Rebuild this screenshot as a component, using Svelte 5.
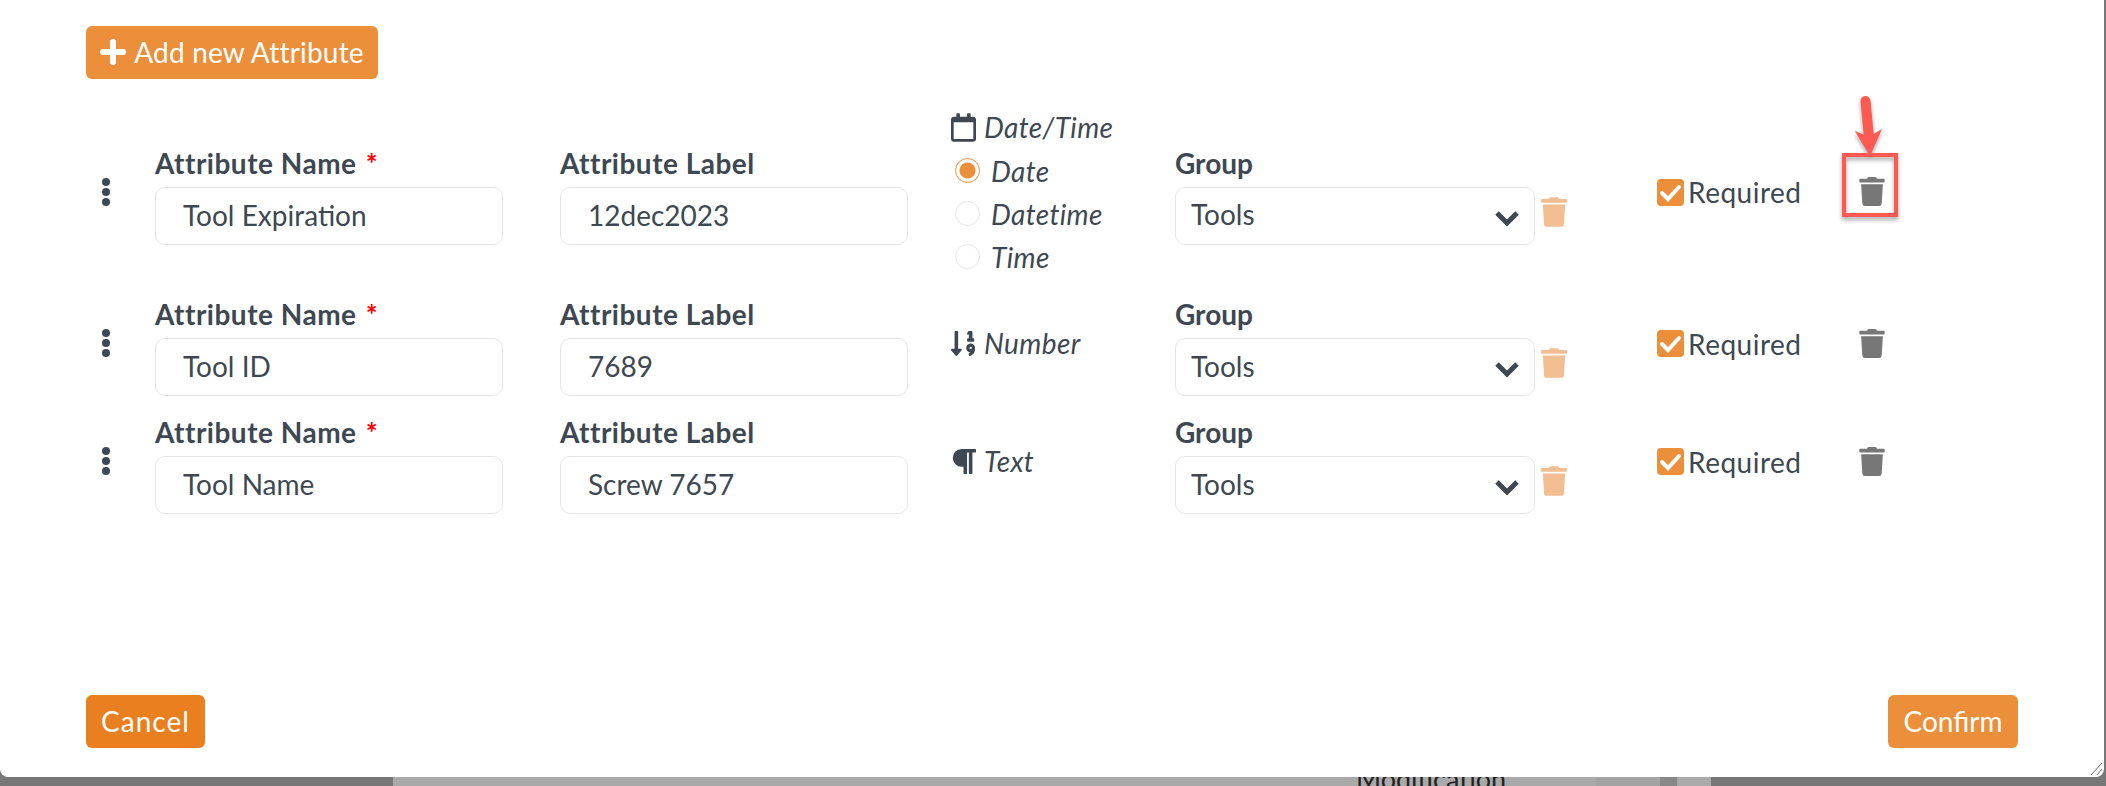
<script>
  const trashPath =
    'M432 32H312l-9.4-18.7A24 24 0 0 0 281.1 0H166.8a23.72 23.72 0 0 0-21.4 13.3L136 32H16A16 16 0 0 0 0 48v32a16 16 0 0 0 16 16h416a16 16 0 0 0 16-16V48a16 16 0 0 0-16-16zM53.2 467a48 48 0 0 0 47.9 45h245.8a48 48 0 0 0 47.9-45L416 128H32z';

  const icons = {
    calendar: {
      box: '0 0 448 512',
      d: 'M400 64h-48V12c0-6.6-5.4-12-12-12h-40c-6.6 0-12 5.4-12 12v52H160V12c0-6.6-5.4-12-12-12h-40c-6.6 0-12 5.4-12 12v52H48C21.5 64 0 85.5 0 112v352c0 26.5 21.5 48 48 48h352c26.5 0 48-21.5 48-48V112c0-26.5-21.5-48-48-48zm-6 400H54c-3.3 0-6-2.7-6-6V160h352v298c0 3.3-2.7 6-6 6z'
    },
    number: {
      box: '0 0 448 512',
      d: 'M304 96h16v64h-16a16 16 0 0 0-16 16v32a16 16 0 0 0 16 16h96a16 16 0 0 0 16-16v-32a16 16 0 0 0-16-16h-16V48a16 16 0 0 0-16-16h-48a16 16 0 0 0-14.29 8.83l-16 32A16 16 0 0 0 304 96zm26.15 162.91a79 79 0 0 0-55 54.17c-14.25 51.05 21.21 97.77 68.85 102.53a84.07 84.07 0 0 1-20.85 12.91c-7.57 3.4-10.8 12.47-8.18 20.34l9.9 20c2.87 8.63 12.53 13.49 20.9 9.91 58-24.76 86.25-61.61 86.25-132V336c-.02-51.21-48.4-91.34-101.85-77.09zM352 356a20 20 0 1 1 20-20 20 20 0 0 1-20 20zm-176-4h-48V48a16 16 0 0 0-16-16H80a16 16 0 0 0-16 16v304H16c-14.19 0-21.36 17.24-11.29 27.31l80 96a16 16 0 0 0 22.62 0l80-96C197.35 369.26 190.22 352 176 352z'
    },
    text: {
      box: '0 0 448 512',
      d: 'M448 48v32a16 16 0 0 1-16 16h-48v368a16 16 0 0 1-16 16h-32a16 16 0 0 1-16-16V96h-32v368a16 16 0 0 1-16 16h-32a16 16 0 0 1-16-16V352h-32a160 160 0 0 1 0-320h240a16 16 0 0 1 16 16z'
    }
  };

  let attributes = $state([
    { name: 'Tool Expiration', label: '12dec2023', icon: 'calendar', type: 'Date/Time', group: 'Tools', required: true, format: 'Date' },
    { name: 'Tool ID', label: '7689', icon: 'number', type: 'Number', group: 'Tools', required: true },
    { name: 'Tool Name', label: 'Screw 7657', icon: 'text', type: 'Text', group: 'Tools', required: true }
  ]);

  const formats = ['Date', 'Datetime', 'Time'];
</script>

<div class="page">
  <div class="modal">
    <button class="btn add" type="button">
      <svg class="plus" viewBox="0 0 26 26" aria-hidden="true">
        <path d="M13 3v20M3 13h20" />
      </svg>
      Add new Attribute
    </button>

    <div class="rows">
      {#each attributes as attr}
        <div class="row">
          <div class="handle" aria-hidden="true"><i></i><i></i><i></i></div>

          <div class="field name">
            <label>
              <span class="label-text">Attribute Name <b>*</b></span>
              <input type="text" bind:value={attr.name} />
            </label>
          </div>

          <div class="field name">
            <label>
              <span class="label-text">Attribute Label</span>
              <input type="text" bind:value={attr.label} />
            </label>
          </div>

          <div class="type">
            <div class="type-head">
              <svg class="type-icon" viewBox={icons[attr.icon].box} aria-hidden="true">
                <path d={icons[attr.icon].d} />
              </svg>
              <em>{attr.type}</em>
            </div>
            {#if attr.format}
              {#each formats as f}
                <label class="radio">
                  <input type="radio" value={f} bind:group={attr.format} />
                  <em>{f}</em>
                </label>
              {/each}
            {/if}
          </div>

          <div class="group-cell">
            <div class="field group">
              <label>
                <span class="label-text short">Group</span>
                <span class="select">
                  <select bind:value={attr.group}>
                    <option>Tools</option>
                  </select>
                  <svg class="chevron" viewBox="0 0 26 16" aria-hidden="true">
                    <path d="M3 3l10 10L23 3" />
                  </svg>
                </span>
              </label>
            </div>
            <svg class="group-trash" viewBox="0 0 448 512" aria-hidden="true"><path d={trashPath} /></svg>
          </div>

          <label class="required">
            <input type="checkbox" bind:checked={attr.required} />
            <span class="box">
              <svg viewBox="0 0 27 27" aria-hidden="true"><path d="M5 14l6 6L22 8" /></svg>
            </span>
            Required
          </label>

          <svg class="delete" viewBox="0 0 448 512" aria-hidden="true"><path d={trashPath} /></svg>
        </div>
      {/each}
    </div>

    <div class="footer">
      <button class="btn cancel" type="button">Cancel</button>
      <button class="btn confirm" type="button">Confirm</button>
    </div>

    <!-- screenshot annotation over the first delete icon -->
    <svg class="callout" viewBox="0 0 80 130" aria-hidden="true">
      <path class="arrow" d="M27.500 9 L 31 46" />
      <path class="arrow-head" d="M16.700 38.700 L 31 45 L 44 37 L 32 64 Z" />
      <rect class="frame" x="6" y="63" width="52" height="60" />
    </svg>

    <svg class="grip" viewBox="0 0 14 14" aria-hidden="true">
      <path d="M2 13L13 1M8 13l5-6" />
    </svg>
  </div>

  <div class="behind">
    <div class="band main"><span>Modification</span></div>
    <div class="band side"></div>
    <div class="band dark"></div>
    <div class="band end"></div>
  </div>
</div>

<style>
  :global(body) {
    margin: 0;
    background: #777;
  }

  .page {
    width: 2106px;
    height: 786px;
    overflow: hidden;
    font-family: Lato, "Open Sans", sans-serif;
    color: #3d4852;
  }

  .modal {
    position: relative;
    box-sizing: border-box;
    width: 2104px;
    height: 777px;
    padding: 26px 86px 29px 86px;
    background: #fff;
    border-radius: 0 0 8px 8px;
    display: flex;
    flex-direction: column;
    align-items: flex-start;
  }

  .btn {
    height: 53px;
    padding: 0 0 2px;
    border: none;
    border-radius: 6px;
    color: #fff;
    font: inherit;
    font-size: 28px;
    background: #ec8f3b;
    display: flex;
    align-items: center;
    justify-content: center;
  }

  .add {
    width: 292px;
    gap: 8px;
    letter-spacing: 0.2px;
  }

  .plus {
    width: 26px;
    height: 26px;
    fill: none;
    stroke: #fff;
    stroke-width: 6;
    stroke-linecap: round;
  }

  .rows {
    margin-top: 26px;
    display: flex;
    flex-direction: column;
    gap: 12px;
  }

  .row {
    display: grid;
    grid-template-columns: 69px 405px 385px 230px 482px 202px 26px;
    align-items: center;
  }

  .handle {
    display: flex;
    flex-direction: column;
    gap: 2px;
    padding-left: 16px;
  }

  .handle i {
    display: block;
    width: 8px;
    height: 8px;
    border-radius: 50%;
    background: #3d4852;
  }

  .field {
    box-sizing: border-box;
    width: 348px;
    height: 106px;
    padding-top: 10px;
  }

  .field.group {
    width: 360px;
  }

  .label-text {
    display: block;
    height: 38px;
    line-height: 28px;
    font-size: 28px;
    font-weight: 700;
    letter-spacing: 0.5px;
    white-space: nowrap;
  }

  .label-text.short {
    letter-spacing: 0;
  }

  .label-text b {
    color: #f00;
    font-size: 28px;
    font-weight: 700;
    margin-left: 2px;
  }

  input[type='text'],
  select {
    display: block;
    box-sizing: border-box;
    width: 100%;
    height: 58px;
    padding-bottom: 3px;
    border: 1px solid #e4e6e8;
    border-radius: 10px;
    background: #fff;
    color: #3d4852;
    font: inherit;
    font-size: 28px;
    outline: none;
  }

  input[type='text'] {
    padding-left: 27px;
    padding-right: 27px;
  }

  select {
    padding-left: 15px;
    padding-right: 15px;
    appearance: none;
  }

  .select {
    display: block;
    position: relative;
  }

  .chevron {
    position: absolute;
    right: 15px;
    top: 23px;
    width: 26px;
    height: 16px;
    fill: none;
    stroke: #3d4852;
    stroke-width: 5;
    pointer-events: none;
  }

  .type {
    font-size: 28px;
    padding-left: 6px;
  }

  .type-head {
    display: flex;
    align-items: center;
    gap: 8px;
    height: 44px;
  }

  .type-icon {
    width: 25px;
    height: 29px;
    fill: #3d4852;
  }

  em {
    font-style: italic;
    font-weight: 400;
    letter-spacing: 0.4px;
  }

  .radio {
    display: flex;
    align-items: center;
    gap: 11px;
    height: 43px;
    padding-left: 4px;
  }

  .radio input {
    appearance: none;
    width: 25px;
    height: 25px;
    margin: 0;
    border: 1px solid #e4e6e8;
    border-radius: 50%;
    background: #fff;
  }

  .radio input:checked {
    border-color: #ec8f3b;
    background: radial-gradient(circle, #ec8f3b 0 7.500px, #fff 8.500px);
  }

  .group-cell {
    display: flex;
    align-items: flex-end;
  }

  .group-trash {
    width: 26px;
    height: 30px;
    margin: 0 0 18px 6px;
    fill: #f3bd92;
  }

  .required {
    display: flex;
    align-items: center;
    gap: 4px;
    font-size: 28px;
    letter-spacing: 0.5px;
    margin-top: 1px;
  }

  .required input {
    position: absolute;
    opacity: 0;
    width: 0;
    height: 0;
  }

  .box {
    width: 27px;
    height: 27px;
    border-radius: 4px;
    background: #ec8f3b;
  }

  .box svg {
    display: block;
    width: 27px;
    height: 27px;
    fill: none;
    stroke: #fff;
    stroke-width: 4;
    stroke-linecap: round;
  }

  .delete {
    width: 26px;
    height: 29px;
    fill: #777;
  }

  .footer {
    margin-top: auto;
    width: 100%;
    display: flex;
    justify-content: space-between;
  }

  .cancel {
    width: 119px;
    background: #e97f1e;
    letter-spacing: 1px;
  }

  .confirm {
    width: 130px;
  }

  .callout {
    position: absolute;
    left: 1838px;
    top: 92px;
    width: 80px;
    height: 130px;
    overflow: visible;
    filter: drop-shadow(0 3px 2px rgba(0, 0, 0, 0.35));
  }

  .arrow {
    fill: none;
    stroke: #ff5a52;
    stroke-width: 10;
    stroke-linecap: round;
  }

  .arrow-head {
    fill: #ff5a52;
  }

  .frame {
    fill: none;
    stroke: #ff5a52;
    stroke-width: 4;
  }

  .grip {
    position: absolute;
    right: 1px;
    bottom: 1px;
    width: 14px;
    height: 14px;
    fill: none;
    stroke: #666;
    stroke-width: 1;
  }

  .behind {
    display: flex;
    height: 9px;
    padding-left: 393px;
    overflow: hidden;
  }

  .band {
    height: 9px;
  }

  .main {
    width: 1203px;
    background: #a9a9a9;
    padding-left: 963px;
    box-sizing: border-box;
  }

  .main span {
    display: block;
    margin-top: -13px;
    font-size: 27px;
    line-height: 30px;
    color: #222;
    white-space: nowrap;
  }

  .side {
    width: 64px;
    background: #a3a3a3;
  }

  .dark {
    width: 17px;
    background: #888;
  }

  .end {
    width: 34px;
    background: #aaa;
  }
</style>
